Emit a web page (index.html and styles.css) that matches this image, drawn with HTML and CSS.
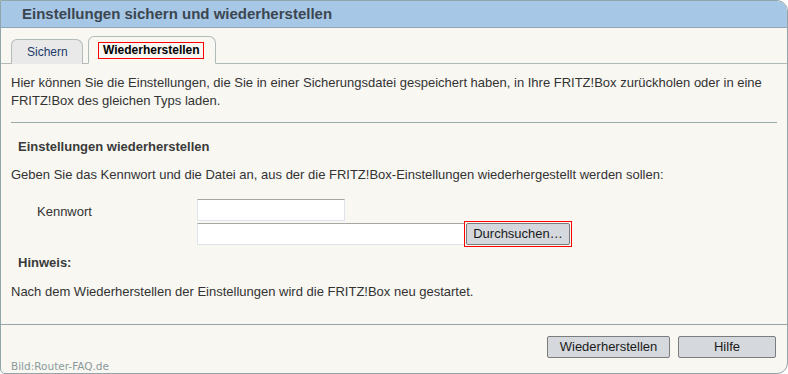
FILE: index.html
```html
<!DOCTYPE html>
<html lang="de">
<head>
<meta charset="utf-8">
<title>Einstellungen sichern und wiederherstellen</title>
<link rel="stylesheet" href="styles.css">
</head>
<body>
<div class="panel">
  <div class="head">Einstellungen sichern und wiederherstellen</div>
  <div class="tabs">
    <div class="tab">Sichern</div>
    <div class="tab active"><span class="focus">Wiederherstellen</span></div>
  </div>
  <div class="content">
    <p class="desc">Hier können Sie die Einstellungen, die Sie in einer Sicherungsdatei gespeichert haben, in Ihre FRITZ!Box zurückholen oder in eine FRITZ!Box des gleichen Typs laden.</p>
    <div class="rule"></div>
    <h2 class="sub">Einstellungen wiederherstellen</h2>
    <p class="line">Geben Sie das Kennwort und die Datei an, aus der die FRITZ!Box-Einstellungen wiederhergestellt werden sollen:</p>
    <div class="form">
      <div class="row">
        <span class="label">Kennwort</span>
        <span class="input short"></span>
      </div>
      <div class="row">
        <span class="label"></span>
        <span class="input long"></span>
        <span class="focusbtn"><span class="btn browse">Durchsuchen…</span></span>
      </div>
    </div>
    <h2 class="sub hint">Hinweis:</h2>
    <p class="line note">Nach dem Wiederherstellen der Einstellungen wird die FRITZ!Box neu gestartet.</p>
  </div>
  <div class="foot">
    <span class="mark">Bild:Router-FAQ.de</span>
    <div class="actions">
      <span class="btn wide">Wiederherstellen</span>
      <span class="btn help">Hilfe</span>
    </div>
  </div>
</div>
</body>
</html>
```

FILE: styles.css
```css
html, body {
  margin: 0;
  padding: 0;
  background: #ffffff;
}

.panel {
  width: 788px;
  height: 374px;
  box-sizing: border-box;
  border: 1px solid #92a5a9;
  border-radius: 0 11px 11px 5px;
  background: #f8f7f2;
  overflow: hidden;
  display: flex;
  flex-direction: column;
  font-family: "Liberation Sans", Arial, sans-serif;
  font-size: 13px;
  color: #333333;
}

.head {
  height: 26px;
  line-height: 26px;
  background: #a6c8e6;
  border-bottom: 1px solid #8ea7b6;
  padding-left: 21px;
  font-weight: bold;
  font-size: 15px;
  color: #3c4650;
}

.tabs {
  display: flex;
  align-items: flex-end;
  gap: 5px;
  padding: 8px 0 0 10px;
  height: 27px;
  border-bottom: 1px solid #b2baba;
  font-size: 12px;
}

.tab {
  box-sizing: border-box;
  height: 25px;
  margin-bottom: -1px;
  border: 1px solid #b2baba;
  border-bottom: none;
  border-radius: 6px 7px 0 0;
  background: #e9e9e9;
  color: #1c3a6a;
  width: 72px;
  padding-top: 5px;
  padding-left: 15px;
}

.tab.active {
  height: 28px;
  width: 128px;
  background: #f8f7f2;
  color: #000000;
  font-weight: bold;
  padding-left: 9px;
  padding-top: 5px;
  border-bottom: 1px solid #f8f7f2;
}

.focus {
  display: inline-block;
  border: 1px solid #ff0000;
  padding: 1px 3px 1px 4px;
  line-height: 13px;
}

.content {
  flex: 1;
  padding: 0 10px;
}

.desc {
  margin: 10px 0 0;
  line-height: 18px;
}

.rule {
  height: 1px;
  background: #9aa9a9;
  margin-top: 12px;
}

.sub {
  margin: 15px 0 0 7px;
  font-size: 13px;
  font-weight: bold;
  line-height: 18px;
  color: #3a3a3a;
}

.line {
  margin: 10px 0 0;
  line-height: 18px;
}

.form {
  margin-top: 15px;
  display: flex;
  flex-direction: column;
  gap: 2px;
}

.row {
  display: flex;
  align-items: center;
  height: 22px;
}

.label {
  width: 186px;
  padding-left: 26px;
  box-sizing: border-box;
  padding-top: 2px;
  flex: none;
}

.input {
  display: block;
  box-sizing: border-box;
  height: 22px;
  background: #ffffff;
  border: 1px solid #dfe4ec;
  border-top-color: #a6a6a6;
}

.input.short { width: 148px; }
.input.long { width: 268px; }

.focusbtn {
  display: inline-block;
  border: 1px solid #ff0000;
  padding: 1px;
  margin-left: -1px;
}

.btn {
  display: inline-block;
  box-sizing: border-box;
  height: 22px;
  line-height: 20px;
  border: 1px solid #7c7c7c;
  border-radius: 2px;
  background: #d5d9dd;
  color: #1a1a1a;
  font-size: 13px;
  text-align: center;
}

.browse { width: 104px; }

.hint { margin-top: 9px; }

.note { margin-top: 11px; }

.foot {
  height: 49px;
  border-top: 1px solid #96a6a6;
  position: relative;
  display: flex;
  justify-content: flex-end;
  padding: 11px 11px 0 0;
  box-sizing: border-box;
}

.actions {
  display: flex;
  gap: 8px;
}

.wide { width: 123px; }
.help { width: 98px; }

.mark {
  position: absolute;
  left: 10px;
  bottom: 1px;
  font-family: "DejaVu Sans", sans-serif;
  font-size: 10.5px;
  color: #8a9a9c;
}
```
